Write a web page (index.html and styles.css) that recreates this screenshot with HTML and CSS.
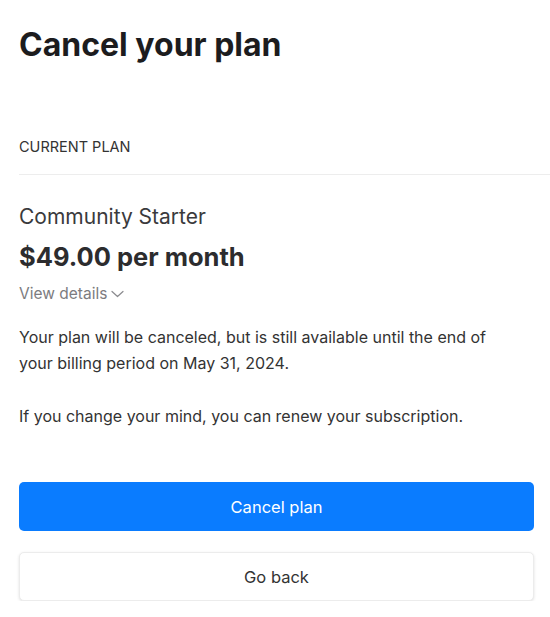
FILE: index.html
```html
<!DOCTYPE html>
<html lang="en">
<head>
    <meta charset="UTF-8">
    <meta name="viewport" content="width=device-width, initial-scale=1.0">
    <title>Cancel your plan</title>
    <link rel="stylesheet" href="styles.css">
</head>
<body>
    <div class="page">
        <h1>Cancel your plan</h1>

        <div class="section-label">CURRENT PLAN</div>

        <div class="plan">
            <div class="plan-name">Community Starter</div>
            <div class="plan-price">$49.00 per month</div>
            <button class="details-toggle">
                View details
                <svg width="13" height="8" viewBox="0 0 13 8" fill="none">
                    <path d="M1 1.5l5.5 5 5.5-5" stroke="#8a8a8e" stroke-width="1.2" stroke-linecap="round" stroke-linejoin="round"/>
                </svg>
            </button>
        </div>

        <div class="notice">
            <p>Your plan will be canceled, but is still available until the end of your billing period on May 31, 2024.</p>
            <p>If you change your mind, you can renew your subscription.</p>
        </div>

        <div class="actions">
            <button class="btn btn-primary">Cancel plan</button>
            <button class="btn btn-secondary">Go back</button>
        </div>
    </div>
</body>
</html>
```

FILE: styles.css
```css
body {
    margin: 0;
    background-color: #fff;
    color: #333;
    font-family: Inter, "Liberation Sans", Arial, sans-serif;
}
.page {
    padding: 25px 16px 0 19px;
}
h1 {
    margin: 0;
    font-size: 32px;
    line-height: 40px;
    font-weight: 700;
    color: #1c1c1e;
}
.section-label {
    margin: 72px -16px 0 0;
    padding-bottom: 17px;
    font-size: 14.5px;
    line-height: 20px;
    color: #333;
    border-bottom: 1px solid #ededed;
}
.plan {
    margin-top: 28px;
}
.plan-name {
    font-size: 21px;
    line-height: 28px;
    color: #3a3a3c;
}
.plan-price {
    margin-top: 10px;
    font-size: 25.5px;
    line-height: 32px;
    font-weight: 700;
    color: #2c2c2e;
}
.details-toggle {
    margin-top: 11px;
    padding: 0;
    border: none;
    background: none;
    font-family: inherit;
    font-size: 15.5px;
    line-height: 20px;
    color: #7c7c80;
    display: flex;
    align-items: center;
    gap: 4px;
}
.notice {
    margin-top: 20px;
    max-width: 490px;
    font-size: 16px;
    line-height: 26px;
    color: #333;
}
.notice p {
    margin: 0 0 27px;
}
.notice p:last-child {
    margin-bottom: 0;
}
.actions {
    margin-top: 53px;
    display: flex;
    flex-direction: column;
    gap: 21px;
}
.btn {
    height: 49px;
    border-radius: 5px;
    font-family: inherit;
    font-size: 16.5px;
    cursor: pointer;
}
.btn-primary {
    background-color: #0a7cff;
    color: #fff;
    border: none;
}
.btn-secondary {
    background-color: #fff;
    color: #333;
    border: 1px solid #ececec;
    box-shadow: 0 1px 3px rgba(0, 0, 0, 0.12);
}
```
